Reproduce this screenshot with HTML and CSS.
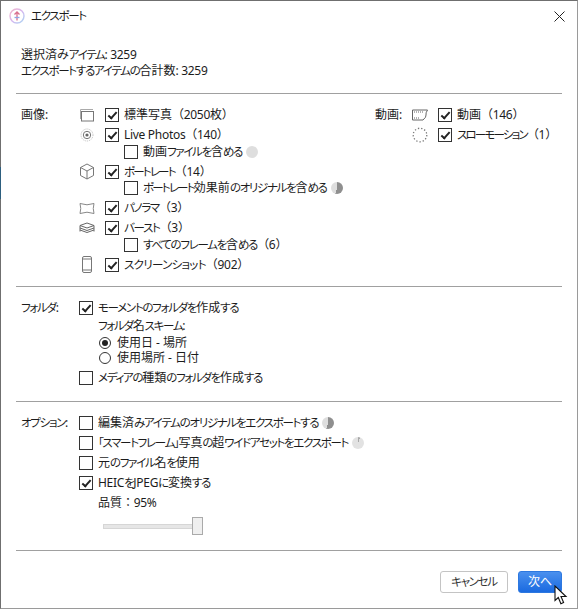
FILE: index.html
```html
<!DOCTYPE html>
<html lang="ja">
<head>
  <meta charset="UTF-8">
  <title>エクスポート</title>
  <link rel="stylesheet" href="styles.css">
</head>
<body>
  <div class="dialog">
    <!-- Title bar -->
    <header class="titlebar">
      <svg class="app-icon" width="16" height="16" viewBox="0 0 16 16" fill="none">
        <defs>
          <linearGradient id="ring" x1="0" y1="0" x2="1" y2="1">
            <stop offset="0" stop-color="#f3b4c8"/>
            <stop offset=".5" stop-color="#d6b6ef"/>
            <stop offset="1" stop-color="#a9d6f3"/>
          </linearGradient>
        </defs>
        <circle cx="8" cy="8" r="7" stroke="url(#ring)" stroke-width="1.4"/>
        <path d="M8 3.500v9M5.500 6.500 8 4l2.500 2.500" stroke="#d9708f" stroke-width="1.300"/>
        <path d="M5.500 9.500h5" stroke="#8fa6e6" stroke-width="1.300"/>
      </svg>
      <span class="title"><span class="k">エクスポート</span></span>
      <svg class="close" width="11" height="11" viewBox="0 0 11 11"><path d="M.5.5l10 10M10.500.5l-10 10" stroke="#222" stroke-width="1" fill="none"/></svg>
    </header>

    <div class="summary">
      <p>選択済み<span class="k">アイテム</span><span class="n">: 3259</span></p>
      <p><span class="k">エクスポートするアイテムの</span>合計数<span class="n">: 3259</span></p>
    </div>

    <!-- Media types -->
    <section class="section media">
      <span class="section-label">画像:</span>
      <div class="media-list">
        <div class="media-row">
          <svg class="media-icon" width="16" height="14" viewBox="0 0 16 14" fill="none" stroke="#777"><path d="M1.500 11V1.500H14" stroke="#aaa"/><rect x="2.500" y="3.500" width="12" height="9.500" stroke="#777"/></svg>
          <span class="box checked"></span><span class="text">標準写真<span class="n">（2050枚）</span></span>
        </div>
        <div class="media-row">
          <svg class="media-icon" width="16" height="14" viewBox="0 0 16 14" fill="none"><circle cx="8" cy="7" r="6" stroke="#bbb" stroke-dasharray="1 1"/><circle cx="8" cy="7" r="3.700" stroke="#777"/><circle cx="8" cy="7" r="1.600" fill="#666"/></svg>
          <span class="box checked"></span><span class="text"><span class="n">Live Photos（140）</span></span>
        </div>
        <div class="sub-row">
          <span class="box"></span><span class="text">動画<span class="k">ファイルを</span>含<span class="k">める</span></span><span class="pie pie-empty"></span>
        </div>
        <div class="media-row">
          <svg class="media-icon" width="16" height="17" viewBox="0 0 16 17" fill="none" stroke="#777"><path d="M8 1l6.500 3.500v8L8 16l-6.500-3.500v-8zM1.500 4.500 8 8l6.500-3.500M8 8v8"/></svg>
          <span class="box checked"></span><span class="text"><span class="k tight">ポートレート</span><span class="n">（14）</span></span>
        </div>
        <div class="sub-row">
          <span class="box"></span><span class="text"><span class="k tight">ポートレート</span>効果前<span class="k">のオリジナルを</span>含<span class="k">める</span></span><span class="pie pie-half"></span>
        </div>
        <div class="media-row">
          <svg class="media-icon" width="16" height="13" viewBox="0 0 16 13" fill="none" stroke="#888"><path d="M1 1.500q7 2.600 14 0-1.500 5 0 10-7-2.600-14 0 1.500-5 0-10z"/></svg>
          <span class="box checked"></span><span class="text"><span class="k">パノラマ</span><span class="n">（3）</span></span>
        </div>
        <div class="media-row">
          <svg class="media-icon" width="16" height="12" viewBox="0 0 16 12" fill="none" stroke="#666"><path d="M1 3.500 8 1l7 2.500-7 2.500zM1 6l7 2.500L15 6M1 8l7 2.500L15 8M1 3.500v6M15 3.500v6"/></svg>
          <span class="box checked"></span><span class="text"><span class="k">バースト</span><span class="n">（3）</span></span>
        </div>
        <div class="sub-row">
          <span class="box"></span><span class="text"><span class="k">すべてのフレームを</span>含<span class="k">める</span><span class="n">（6）</span></span>
        </div>
        <div class="media-row">
          <svg class="media-icon" width="16" height="17" viewBox="0 0 16 17" fill="none" stroke="#777"><rect x="3.500" y=".5" width="9" height="16" rx="1.500"/><path d="M3.500 3h9M3.500 14h9"/></svg>
          <span class="box checked"></span><span class="text"><span class="k wide">スクリーンショット</span><span class="n">（902）</span></span>
        </div>
      </div>

      <div class="video-col">
        <span class="section-label video-label">動画:</span>
        <div class="media-list">
          <div class="media-row">
            <svg class="media-icon" width="16" height="12" viewBox="0 0 16 12" fill="none" stroke="#666"><path d="M.5 1h15q-2 3-1.500 5t-3 5H.5z"/><path d="M2 3h10M2 9h6" stroke-dasharray="1 1"/></svg>
            <span class="box checked"></span><span class="text">動画<span class="n">（146）</span></span>
          </div>
          <div class="media-row">
            <svg class="media-icon" width="16" height="16" viewBox="0 0 16 16" fill="none"><circle cx="8" cy="8" r="6.800" stroke="#777" stroke-width="1.300" stroke-dasharray="1.300 2"/></svg>
            <span class="box checked"></span><span class="text"><span class="k tight">スローモーション</span><span class="n">（1）</span></span>
          </div>
        </div>
      </div>
    </section>

    <!-- Folders -->
    <section class="section folders">
      <span class="section-label"><span class="k">フォルダ</span>:</span>
      <div class="options">
        <div class="check-row"><span class="box checked"></span><span class="text"><span class="k">モーメントのフォルダを</span>作成<span class="k">する</span></span></div>
        <p class="scheme-label"><span class="k">フォルダ</span>名<span class="k">スキーム</span>:</p>
        <div class="radio-row"><span class="radio on"></span><span class="text">使用日 - 場所</span></div>
        <div class="radio-row"><span class="radio"></span><span class="text">使用場所 - 日付</span></div>
        <div class="check-row last"><span class="box"></span><span class="text"><span class="k">メディアの</span>種類<span class="k">のフォルダを</span>作成<span class="k">する</span></span></div>
      </div>
    </section>

    <!-- Options -->
    <section class="section extras">
      <span class="section-label"><span class="k">オプション</span>:</span>
      <div class="options">
        <div class="check-row spaced"><span class="box"></span><span class="text">編集済<span class="k">みアイテムのオリジナルをエクスポートする</span></span><span class="pie pie-half"></span></div>
        <div class="check-row spaced"><span class="box"></span><span class="text"><span class="k">「スマートフレーム」</span>写真<span class="k">の</span>超<span class="k">ワイドアセットをエクスポート</span></span><span class="pie pie-sliver"></span></div>
        <div class="check-row spaced"><span class="box"></span><span class="text">元<span class="k">のファイル</span>名<span class="k">を</span>使用</span></div>
        <div class="check-row spaced"><span class="box checked"></span><span class="text"><span class="n">HEIC</span><span class="k">を</span><span class="n">JPEG</span><span class="k">に</span>変換<span class="k">する</span></span></div>
        <p class="quality">品質<span class="n">：95%</span></p>
        <div class="slider"><span class="thumb"></span></div>
      </div>
    </section>

    <footer class="footer">
      <button class="btn" type="button"><span class="k">キャンセル</span></button>
      <button class="btn primary" type="button">次へ</button>
      <svg class="cursor" width="14" height="20" viewBox="0 0 14 20"><path d="M1 1v14.500l3.300-3 2.600 6.200 2.700-1.200-2.600-6h5z" fill="#fff" stroke="#111" stroke-width="1.100"/></svg>
    </footer>
  </div>
</body>
</html>
```

FILE: styles.css
```css
/* Base */
html, body {
  margin: 0;
  padding: 0;
}
body {
  width: 578px;
  height: 609px;
  overflow: hidden;
  background-color: white;
  font-family: "Noto Sans", "Noto Sans CJK JP", sans-serif;
  font-size: 12px;
  line-height: 16px;
  color: #1c1c1c;
  white-space: nowrap;
  font-feature-settings: "palt";
}
p {
  margin: 0;
}

/* Narrow kana runs and latin/number runs */
.k {
  font-size: 11.5px;
  letter-spacing: -1.3px;
}
.k.tight {
  letter-spacing: -1.8px;
}
.k.wide {
  letter-spacing: -0.7px;
}
.n {
  font-feature-settings: normal;
  letter-spacing: -0.3px;
}

/* Window */
.dialog {
  position: relative;
  box-sizing: border-box;
  width: 578px;
  height: 609px;
  border: 1px solid #6f6f6f;
  border-right-color: #9a9a9a;
  border-bottom-color: #9a9a9a;
  display: flex;
  flex-direction: column;
}
.dialog::before {
  content: "";
  position: absolute;
  left: -1px;
  top: 166px;
  width: 1px;
  height: 32px;
  background-color: #2d5f7f;
}
.titlebar {
  display: flex;
  align-items: center;
  height: 30px;
  flex-shrink: 0;
  padding: 0 12px 0 8px;
}
.title {
  margin-left: 6px;
  flex: 1;
}
.summary {
  box-sizing: border-box;
  height: 62px;
  flex-shrink: 0;
  padding: 16px 20px 0;
}

/* Sections */
.section {
  box-sizing: border-box;
  display: flex;
  flex-shrink: 0;
  margin: 0 15px;
  border-top: 1px solid #a0a0a0;
  padding-left: 5px;
  padding-top: 13px;
}
.section-label {
  width: 58px;
  flex-shrink: 0;
}
.media {
  height: 193px;
}
.folders {
  height: 115px;
}
.extras {
  height: 149px;
}

/* Media rows */
.media-list {
  display: flex;
  flex-direction: column;
}
.media-row {
  display: flex;
  align-items: center;
  height: 16px;
  margin-top: 4px;
}
.media-row:first-child {
  margin-top: 0;
}
.media-icon {
  width: 16px;
  margin-right: 10px;
  flex-shrink: 0;
}
.media-row .box {
  margin-right: 5px;
}
.sub-row {
  display: flex;
  align-items: center;
  height: 16px;
  margin-top: 0.5px;
  padding-left: 45px;
}
.sub-row .box {
  margin-right: 5px;
}
.video-col {
  display: flex;
  margin-left: auto;
  width: 187px;
}
.video-label {
  width: 37px;
}

/* Checkbox and radio */
.box {
  box-sizing: border-box;
  display: inline-block;
  width: 14px;
  height: 14px;
  border: 1px solid #333;
  background-color: white;
  flex-shrink: 0;
  position: relative;
}
.box.checked::after {
  content: "";
  position: absolute;
  left: 4px;
  top: 1px;
  width: 3px;
  height: 7px;
  border: solid #222;
  border-width: 0 2px 2px 0;
  transform: rotate(42deg);
}
.radio {
  box-sizing: border-box;
  display: inline-block;
  width: 12px;
  height: 12px;
  border: 1px solid #333;
  border-radius: 50%;
  margin-right: 6px;
  position: relative;
}
.radio.on::after {
  content: "";
  position: absolute;
  left: 2px;
  top: 2px;
  width: 6px;
  height: 6px;
  background-color: #222;
  border-radius: 50%;
}

/* Option lists */
.options {
  display: flex;
  flex-direction: column;
}
.check-row {
  display: flex;
  align-items: center;
  height: 16px;
}
.check-row .box {
  margin-right: 5px;
}
.check-row.spaced {
  margin-bottom: 4px;
}
.check-row.last {
  margin-top: 5px;
}
.scheme-label {
  margin: 2px 0 0 19px;
}
.radio-row {
  display: flex;
  align-items: center;
  height: 15px;
  line-height: 15px;
  padding-left: 20px;
  margin-top: 1px;
}
.radio-row + .radio-row {
  margin-top: 0;
}
.quality {
  margin-left: 19px;
}
.slider {
  position: relative;
  box-sizing: border-box;
  width: 92px;
  height: 5px;
  margin: 13px 0 0 24px;
  background-color: #e6e6e6;
  border: 1px solid #d6d6d6;
}
.thumb {
  position: absolute;
  left: 88px;
  top: -8px;
  box-sizing: border-box;
  width: 11px;
  height: 18px;
  background-color: #efefef;
  border: 1px solid #aaa;
}

/* Progress pies */
.pie {
  display: inline-block;
  width: 12px;
  height: 12px;
  border-radius: 50%;
  margin-left: 4px;
  background-color: #dedede;
}
.pie-half {
  background: conic-gradient(#8f8f8f 0 55%, #dedede 55% 100%);
}
.pie-sliver {
  background: conic-gradient(#a8a8a8 0 6%, #e2e2e2 6% 100%);
}

/* Footer */
.footer {
  position: relative;
  display: flex;
  align-items: flex-start;
  justify-content: flex-end;
  gap: 10px;
  margin: 0 15px;
  border-top: 1px solid #a0a0a0;
  padding-top: 20px;
}
.btn {
  box-sizing: border-box;
  height: 22px;
  width: 68px;
  padding: 0;
  font: inherit;
  font-feature-settings: "palt";
  color: #333;
  background-color: white;
  border: 1px solid #c4c4c4;
  border-radius: 3px;
}
.btn.primary {
  width: 44px;
  color: white;
  border-color: #2d78e0;
  background: linear-gradient(#4a90ee, #1a6ae0);
}
.cursor {
  position: absolute;
  left: 538px;
  top: 34px;
}
```
